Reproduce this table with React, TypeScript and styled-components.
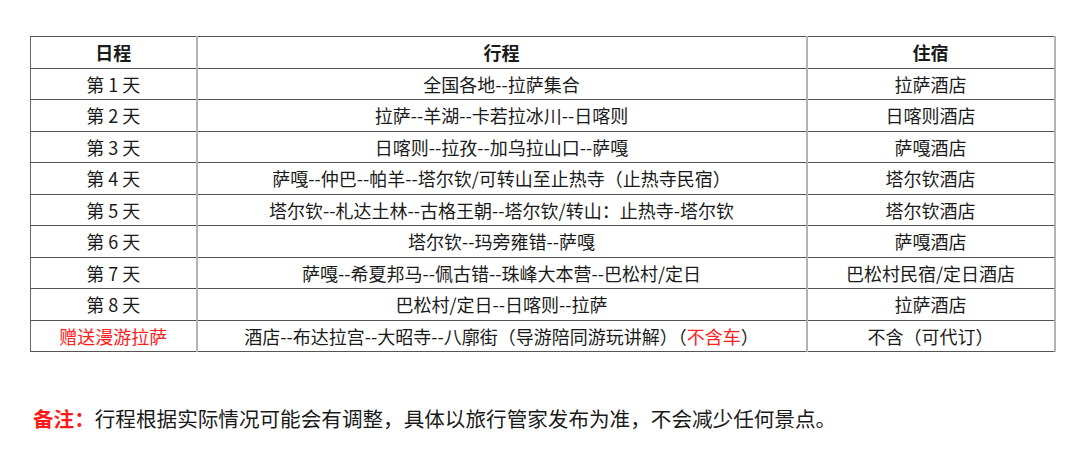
import React from "react";
import styled, { createGlobalStyle } from "styled-components";

const Global = createGlobalStyle`
  html, body { margin: 0; padding: 0; background: #fff; }
  body { font-family: "Noto Sans CJK SC", "Noto Sans", sans-serif; color: #1a1a1a; }
`;

const Page = styled.div`
  width: 1080px;
  height: 464px;
  padding: 36px 0 0 30px;
  box-sizing: border-box;
`;

const Table = styled.table`
  border-collapse: collapse;
  width: 1024px;
  table-layout: fixed;
  font-size: 18px;
`;

const Cell = styled.td<{ $head?: boolean; $red?: boolean }>`
  height: 30.5px;
  padding: 0;
  text-align: center;
  vertical-align: middle;
  line-height: 22px;
  border-top: 1px solid #555;
  border-bottom: 1px solid #555;
  border-left: 2px solid #b3b3b3;
  border-right: 2px solid #b3b3b3;
  font-weight: ${(p) => (p.$head ? 700 : 400)};
  color: ${(p) => (p.$red ? "#ff2020" : "#1a1a1a")};
  white-space: nowrap;
  &:first-child { border-left: 1.5px solid #666; }
`;

const Red = styled.span`
  color: #ff2020;
`;

const Note = styled.p`
  margin: 53px 0 0 3px;
  font-size: 20.6px;
  line-height: 26px;
  color: #1a1a1a;
`;

const NoteLabel = styled.span`
  color: #ff1a1a;
  font-weight: 700;
`;

const rows: [string, React.ReactNode, string, boolean?][] = [
  ["第 1 天", "全国各地--拉萨集合", "拉萨酒店"],
  ["第 2 天", "拉萨--羊湖--卡若拉冰川--日喀则", "日喀则酒店"],
  ["第 3 天", "日喀则--拉孜--加乌拉山口--萨嘎", "萨嘎酒店"],
  ["第 4 天", "萨嘎--仲巴--帕羊--塔尔钦/可转山至止热寺（止热寺民宿）", "塔尔钦酒店"],
  ["第 5 天", "塔尔钦--札达土林--古格王朝--塔尔钦/转山：止热寺-塔尔钦", "塔尔钦酒店"],
  ["第 6 天", "塔尔钦--玛旁雍错--萨嘎", "萨嘎酒店"],
  ["第 7 天", "萨嘎--希夏邦马--佩古错--珠峰大本营--巴松村/定日", "巴松村民宿/定日酒店"],
  ["第 8 天", "巴松村/定日--日喀则--拉萨", "拉萨酒店"],
  [
    "赠送漫游拉萨",
    <>
      酒店--布达拉宫--大昭寺--八廓街（导游陪同游玩讲解）（<Red>不含车</Red>）
    </>,
    "不含（可代订）",
    true,
  ],
];

export default function App() {
  return (
    <Page>
      <Global />
      <Table>
        <colgroup>
          <col style={{ width: 166 }} />
          <col style={{ width: 610 }} />
          <col style={{ width: 248 }} />
        </colgroup>
        <tbody>
          <tr>
            <Cell $head>日程</Cell>
            <Cell $head>行程</Cell>
            <Cell $head>住宿</Cell>
          </tr>
          {rows.map(([d, r, h, red], i) => (
            <tr key={i}>
              <Cell $red={red}>{d}</Cell>
              <Cell>{r}</Cell>
              <Cell>{h}</Cell>
            </tr>
          ))}
        </tbody>
      </Table>
      <Note>
        <NoteLabel>备注：</NoteLabel>行程根据实际情况可能会有调整，具体以旅行管家发布为准，不会减少任何景点。
      </Note>
    </Page>
  );
}
